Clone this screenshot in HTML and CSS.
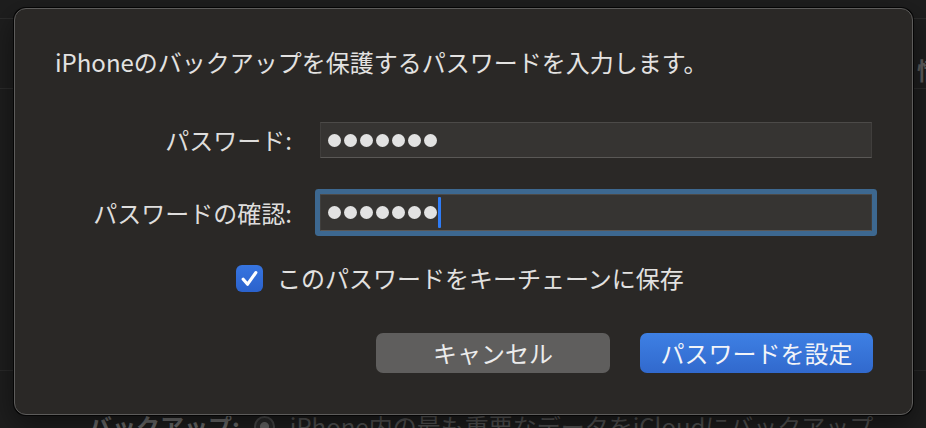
FILE: index.html
```html
<!DOCTYPE html>
<html lang="ja">
<head>
<meta charset="utf-8">
<title>パスワードを設定</title>
<link rel="stylesheet" href="styles.css">
</head>
<body>
<div class="backdrop">
  <div class="bg-toolbar"></div>
  <div class="bg-info"><span class="bg-info-text">情報</span></div>
  <div class="bg-main"></div>
  <div class="bg-backup">
    <span class="bg-backup-label">バックアップ:</span>
    <span class="bg-radio"></span>
    <span class="bg-backup-text">iPhone内の最も重要なデータをiCloudにバックアップ</span>
  </div>
</div>

<div class="dialog" role="dialog">
  <p class="dialog-title">iPhoneのバックアップを保護するパスワードを入力します。</p>

  <div class="form">
    <label class="form-label">パスワード:</label>
    <div class="field">
      <span class="dots"><i></i><i></i><i></i><i></i><i></i><i></i><i></i></span>
    </div>
    <label class="form-label">パスワードの確認:</label>
    <div class="field field-focused">
      <span class="dots"><i></i><i></i><i></i><i></i><i></i><i></i><i></i></span>
      <span class="caret"></span>
    </div>
  </div>

  <div class="check-row">
    <span class="checkbox">
      <svg viewBox="0 0 27 27" width="27" height="27"><path d="M7.2 14.2 L11.6 19.2 L19.8 7.6" fill="none" stroke="#ffffff" stroke-width="3.2" stroke-linecap="round" stroke-linejoin="round"/></svg>
    </span>
    <span class="check-label">このパスワードをキーチェーンに保存</span>
  </div>

  <div class="buttons">
    <button class="btn btn-cancel">キャンセル</button>
    <button class="btn btn-default">パスワードを設定</button>
  </div>
</div>
</body>
</html>
```

FILE: styles.css
```css
* { box-sizing: border-box; }

html, body {
  margin: 0;
  padding: 0;
}

body {
  width: 926px;
  height: 428px;
  overflow: hidden;
  background: #1e1e1e;
  font-family: "Noto Sans CJK JP", "Noto Sans", sans-serif;
  position: relative;
}

/* ---------- backdrop (window behind the sheet) ---------- */
.backdrop {
  display: flex;
  flex-direction: column;
  height: 428px;
  overflow: hidden;
}

.backdrop > div {
  flex-shrink: 0;
}

.bg-toolbar {
  height: 19px;
  border-bottom: 1px solid #2c2c2c;
}

.bg-info {
  height: 70px;
  border-bottom: 1px solid #2c2c2c;
  padding-left: 917px;
  padding-top: 35px;
  white-space: nowrap;
  overflow: hidden;
}

.bg-info-text {
  font-size: 24px;
  line-height: 32px;
  font-weight: 700;
  color: #5e5e5e;
}

.bg-main {
  height: 282px;
  border-bottom: 1px solid #2a2a2a;
}

.bg-backup {
  display: flex;
  align-items: flex-start;
  padding-top: 39px;
  padding-left: 88px;
  white-space: nowrap;
  height: 80px;
}

.bg-backup-label {
  font-size: 24px;
  line-height: 32px;
  font-weight: 700;
  color: #6f6f6f;
}

.bg-radio {
  width: 21px;
  height: 21px;
  border-radius: 50%;
  border: 2px solid #4a4a4a;
  background: radial-gradient(circle, #6a6a6a 0 4px, #2c2c2c 5px);
  margin-left: 14px;
  margin-top: 6px;
}

.bg-backup-text {
  margin-left: 15px;
  font-size: 24px;
  line-height: 32px;
  color: #555555;
}

/* ---------- sheet dialog ---------- */
.dialog {
  position: absolute;
  left: 14px;
  top: 8px;
  width: 899px;
  height: 407px;
  background: #2a2826;
  border: 1px solid #5d5c5b;
  border-radius: 12px;
  box-shadow: 0 0 0 1px #050505, 0 10px 30px rgba(0, 0, 0, 0.5);
  color: #e2e1e0;
}

.dialog-title {
  margin: 37px 0 0 40px;
  font-size: 24px;
  line-height: 32px;
  color: #e3e2e1;
  white-space: nowrap;
}

.form {
  display: grid;
  grid-template-columns: 277px 552px;
  column-gap: 28px;
  row-gap: 36px;
  align-items: center;
  margin-top: 44px;
}

.form-label {
  text-align: right;
  font-size: 24px;
  line-height: 32px;
  color: #dedddc;
  white-space: nowrap;
}

.field {
  height: 36px;
  background: #363432;
  border: 1px solid;
  border-color: #4c4a48 #403e3c #5a5856 #403e3c;
  display: flex;
  align-items: center;
  padding-left: 7px;
}

.field-focused {
  height: 37px;
  border-radius: 1px;
  box-shadow: 0 0 0 5px #3d6890;
}

.dots {
  display: flex;
  gap: 3px;
}

.dots i {
  display: block;
  width: 13px;
  height: 13px;
  border-radius: 50%;
  background: #e2e2e2;
}

.caret {
  width: 3px;
  height: 31px;
  margin-left: 1px;
  background: #2f7cf6;
  border-radius: 1px;
}

.check-row {
  display: flex;
  align-items: center;
  margin-top: 31px;
  margin-left: 221px;
}

.checkbox {
  width: 27px;
  height: 27px;
  border-radius: 6px;
  background: linear-gradient(#3775e0, #2b62cc);
  display: flex;
}

.check-label {
  margin-left: 14px;
  font-size: 24px;
  line-height: 32px;
  color: #e2e1e0;
  white-space: nowrap;
}

.buttons {
  display: flex;
  justify-content: flex-end;
  gap: 30px;
  margin-top: 39px;
  margin-right: 39px;
}

.btn {
  width: 234px;
  height: 40px;
  border: none;
  border-radius: 7px;
  font-family: "Noto Sans CJK JP", "Noto Sans", sans-serif;
  font-size: 24px;
  line-height: 32px;
  padding: 0;
  color: #ececec;
}

.btn-cancel {
  background: #5f5e5d;
}

.btn-default {
  width: 233px;
  background: linear-gradient(#3e80e4, #3169cd);
  color: #f2f4f8;
}
```
